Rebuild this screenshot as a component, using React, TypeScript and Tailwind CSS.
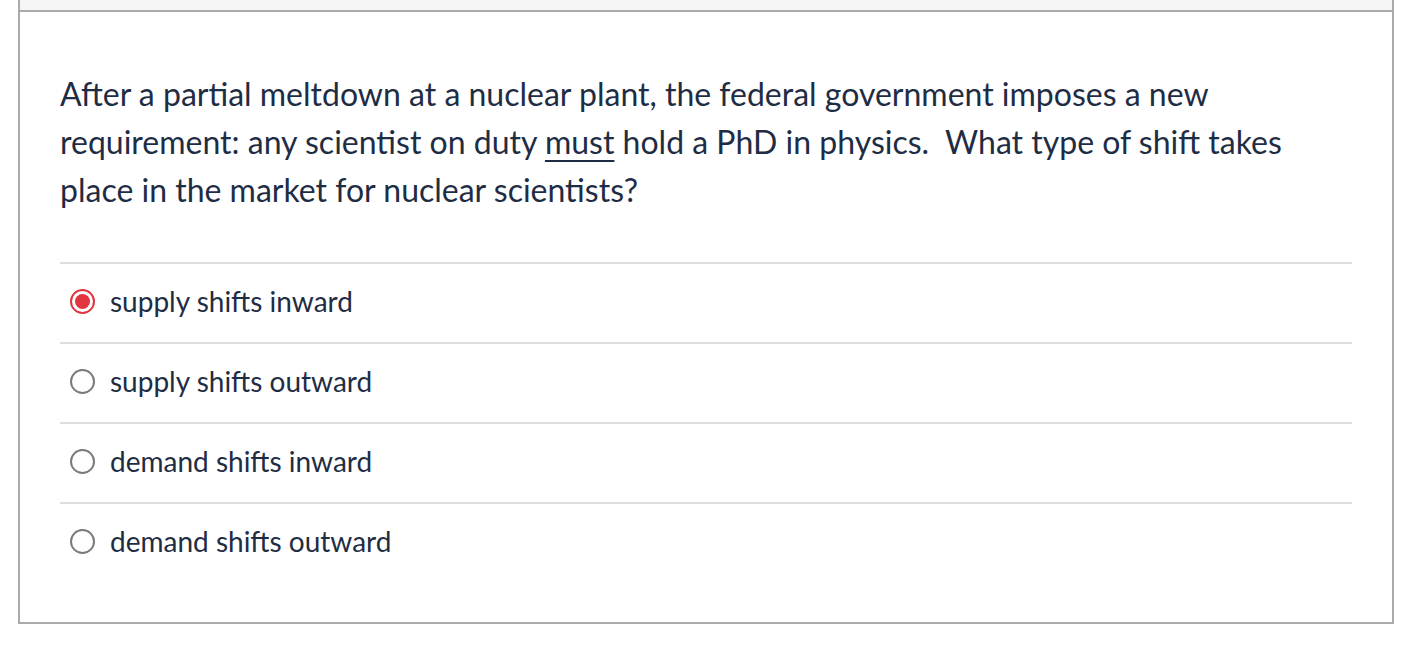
import React from "react";

const options = [
  { label: "supply shifts inward", checked: true },
  { label: "supply shifts outward", checked: false },
  { label: "demand shifts inward", checked: false },
  { label: "demand shifts outward", checked: false },
];

function Radio({ checked }: { checked: boolean }) {
  if (checked) {
    return (
      <span className="flex h-[25px] w-[25px] shrink-0 items-center justify-center rounded-full border-[2px] border-[#e0343e] bg-white">
        <span className="h-[15px] w-[15px] rounded-full bg-[#e0343e]" />
      </span>
    );
  }
  return <span className="h-[25px] w-[25px] shrink-0 rounded-full border-[2px] border-[#7a7a7a] bg-white" />;
}

export default function App() {
  return (
    <div className="min-h-[663px] bg-white pl-[18px] pr-[24px]" style={{ fontFamily: "Lato, 'Noto Sans', sans-serif" }}>
      <div className="w-[1376px] border-x-2 border-b-2 border-[#aaaaaa]">
        <div className="h-[12px] border-b-2 border-[#aaaaaa] bg-[#f5f5f5]" />
        <div className="px-[40px] pb-[40px] pt-[58px]">
          <p className="text-[32px] leading-[48px] text-[#1f2d44]">
            After a partial meltdown at a nuclear plant, the federal government imposes a new requirement: any scientist on duty{" "}
            <span className="underline decoration-[2px] underline-offset-[6px]">must</span> hold a PhD in physics.&nbsp; What type of shift takes place in the market for nuclear scientists?
          </p>
          <div className="mt-[48px]">
            {options.map((o) => (
              <div key={o.label} className="flex h-[80px] items-center border-t-2 border-[#dddddd] pb-[4px] pl-[10px]">
                <Radio checked={o.checked} />
                <span className="ml-[15px] text-[28px] leading-[40px] text-[#1f2d44]">{o.label}</span>
              </div>
            ))}
          </div>
        </div>
      </div>
    </div>
  );
}
